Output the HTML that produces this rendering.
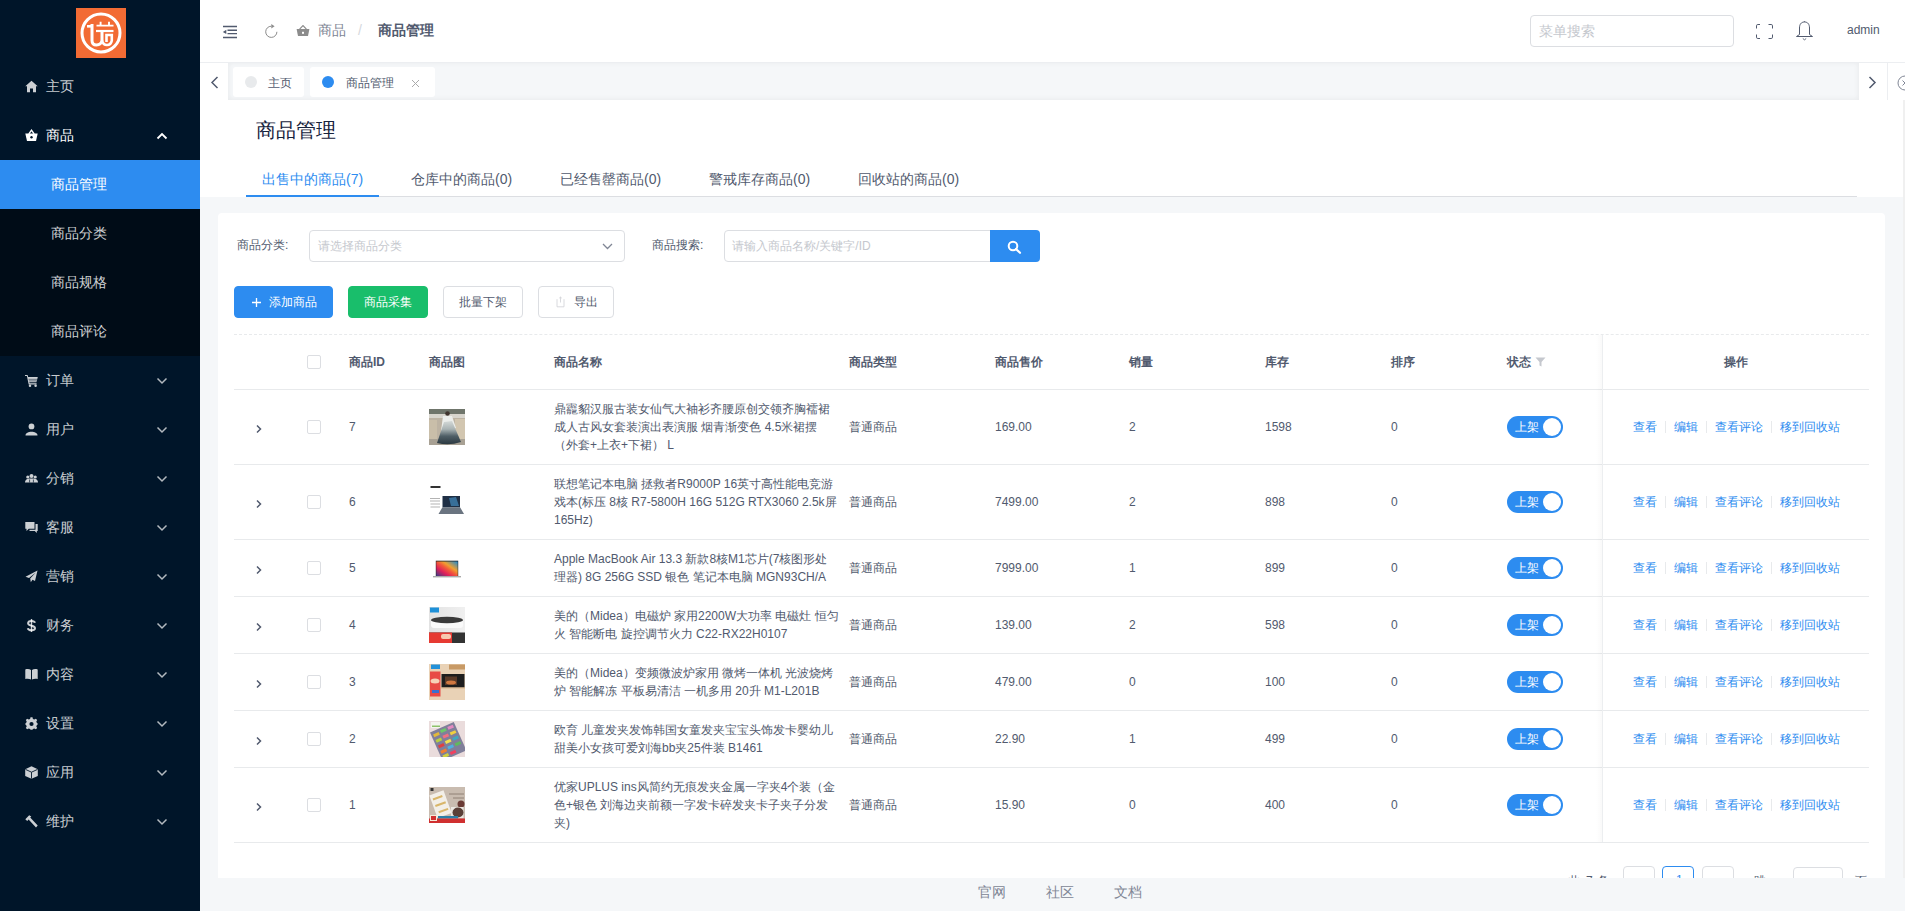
<!DOCTYPE html>
<html><head><meta charset="utf-8"><style>
*{box-sizing:border-box;margin:0;padding:0}
html,body{width:1905px;height:911px;overflow:hidden;background:#f5f7f9;font-family:"Liberation Sans",sans-serif;color:#515a6e;font-size:12px}
svg{display:block}
#side{position:absolute;left:0;top:0;width:200px;height:911px;background:#001529}
#logo{position:absolute;left:76px;top:8px;width:50px;height:50px;background:#f26b34}
.mi{position:absolute;left:0;width:200px;height:49px;color:rgba(255,255,255,.8);font-size:14px}
.mi .ic{position:absolute;left:25px;top:18px}
.mi .tx{position:absolute;left:46px;top:0;line-height:49px}
.mi .ch{position:absolute;left:156px;top:21px}
.mi.open{color:#fff}
.sub{position:absolute;left:0;top:160px;width:200px;height:196px;background:#000c17}
.smi{position:absolute;left:0;width:200px;height:49px;line-height:49px;color:rgba(255,255,255,.82);font-size:14px;padding-left:51px}
.smi.act{background:#2d8cf0;color:#fff}
#hdr{position:absolute;left:200px;top:0;width:1705px;height:62px;background:#fff}
#tabs{position:absolute;left:200px;top:62px;width:1705px;height:38px;background:#f5f7f9}
#main{position:absolute;left:200px;top:100px;width:1703px;height:97px;background:#fff}
#card{position:absolute;left:218px;top:213px;width:1667px;height:700px;background:#fff;border-radius:4px}
#foot{position:absolute;left:200px;top:878px;width:1705px;height:33px;background:#f5f7f9}
.a{position:absolute}
#tbl{position:absolute;left:0;top:0;width:0;height:0}
.th{position:absolute;top:353px;font-size:12px;line-height:18px;font-weight:bold;color:#515a6e;white-space:nowrap}
.td{position:absolute;font-size:12px;line-height:18px;color:#515a6e;white-space:nowrap}
.act{color:#2d8cf0}
.dv{position:absolute;width:1px;height:12px;background:#e8eaec}
.cb{position:absolute;left:307px;width:14px;height:14px;border:1px solid #dcdee2;border-radius:2px;background:#fff}
.sw{position:absolute;left:1507px;width:56px;height:22px;border-radius:11px;background:#2d8cf0}
.knob{position:absolute;left:36px;top:2px;width:18px;height:18px;border-radius:50%;background:#fff}
</style></head><body>
<div id="side">
<div id="logo"><svg width="50" height="50" viewBox="0 0 50 50" fill="none" stroke="#fff"><circle cx="25" cy="25" r="19" stroke-width="3"/><path d="M11 18.3 H16.5" stroke-width="2.6"/><path d="M16 16 V32.5 Q16 37 20.5 37 Q25 37 26 32.5 V22.5" stroke-width="3"/><path d="M26 32.5 Q27 37 31 37 Q35 37 35.8 32.5 V27 H30.5 V34" stroke-width="2.6"/><path d="M20.5 17.6 H37.5 M24.6 13.8 V17.6 M33 13.8 V17.6" stroke-width="1.9"/><path d="M20 23 H37.5" stroke-width="2.2"/></svg></div>
<div class="mi" style="top:62px"><span class="ic"><svg width="13" height="13" viewBox="0 0 13 13" fill="currentColor"><path d="M6.5 0.8 L0.3 6.3 H2 V12.2 H5 V8.5 H8 V12.2 H11 V6.3 H12.7 Z"/></svg></span><span class="tx">主页</span>
</div>
<div class="mi open" style="top:111px"><span class="ic"><svg width="13" height="13" viewBox="0 0 13 13" fill="currentColor"><path d="M3.8 5 L6.5 1.2 L9.2 5" fill="none" stroke="currentColor" stroke-width="1.3"/><path d="M0.3 4.6 H12.7 L11 12 H2 Z"/><circle cx="6.5" cy="8.3" r="1.2" fill="#001529"/></svg></span><span class="tx">商品</span>
<span class="ch"><svg width="12" height="8" viewBox="0 0 12 8"><path d="M1.5 6.5 L6 2 L10.5 6.5" fill="none" stroke="#fff" stroke-width="1.8"/></svg></span>
</div>
<div class="sub">
<div class="smi act" style="top:0px">商品管理</div>
<div class="smi" style="top:49px">商品分类</div>
<div class="smi" style="top:98px">商品规格</div>
<div class="smi" style="top:147px">商品评论</div>
</div>
<div class="mi" style="top:356px"><span class="ic"><svg width="13" height="13" viewBox="0 0 13 13" fill="currentColor"><path d="M0 1 H2.6 L3.1 3 H12.8 L11.4 8.3 H4.3 L4.6 9.3 H11.6 V10.4 H3.7 L1.9 2.1 H0 Z"/><path d="M3.5 5.3 H12 M3.9 6.9 H11.6" stroke="#001529" stroke-width="0.5"/><circle cx="5" cy="11.7" r="1.25"/><circle cx="10.6" cy="11.7" r="1.25"/></svg></span><span class="tx">订单</span><span class="ch"><svg width="12" height="8" viewBox="0 0 12 8"><path d="M1.5 1.5 L6 6 L10.5 1.5" fill="none" stroke="rgba(255,255,255,.7)" stroke-width="1.5"/></svg></span></div>
<div class="mi" style="top:405px"><span class="ic"><svg width="13" height="13" viewBox="0 0 13 13" fill="currentColor"><circle cx="6.5" cy="3.4" r="2.9"/><path d="M0.5 12.5 C0.5 7.6 12.5 7.6 12.5 12.5 Z"/></svg></span><span class="tx">用户</span><span class="ch"><svg width="12" height="8" viewBox="0 0 12 8"><path d="M1.5 1.5 L6 6 L10.5 1.5" fill="none" stroke="rgba(255,255,255,.7)" stroke-width="1.5"/></svg></span></div>
<div class="mi" style="top:454px"><span class="ic"><svg width="13" height="13" viewBox="0 0 13 13" fill="currentColor"><circle cx="2.8" cy="5" r="1.6"/><circle cx="6.5" cy="4" r="2"/><circle cx="10.2" cy="5" r="1.6"/><path d="M0 10.5 C0 6.8 4 6.5 6.5 6.5 C9 6.5 13 6.8 13 10.5 Z"/><path d="M4.6 10.5 V7.5 M8.4 10.5 V7.5" stroke="#001529" stroke-width="0.7"/></svg></span><span class="tx">分销</span><span class="ch"><svg width="12" height="8" viewBox="0 0 12 8"><path d="M1.5 1.5 L6 6 L10.5 1.5" fill="none" stroke="rgba(255,255,255,.7)" stroke-width="1.5"/></svg></span></div>
<div class="mi" style="top:503px"><span class="ic"><svg width="13" height="13" viewBox="0 0 13 13" fill="currentColor"><path d="M0.3 1 H9.5 V7.8 H3.8 L1.5 10 V7.8 H0.3 Z"/><path d="M10.5 3 H12.7 V10 H11.8 V12 L9.8 10 H4.5 V8.8 H10.5 Z"/></svg></span><span class="tx">客服</span><span class="ch"><svg width="12" height="8" viewBox="0 0 12 8"><path d="M1.5 1.5 L6 6 L10.5 1.5" fill="none" stroke="rgba(255,255,255,.7)" stroke-width="1.5"/></svg></span></div>
<div class="mi" style="top:552px"><span class="ic"><svg width="13" height="13" viewBox="0 0 13 13" fill="currentColor"><path d="M12.5 0.5 L0.5 6.8 L4 8 L10.8 2.5 L5.2 8.6 L5.8 12.3 L7.5 9.8 L10 11 Z"/></svg></span><span class="tx">营销</span><span class="ch"><svg width="12" height="8" viewBox="0 0 12 8"><path d="M1.5 1.5 L6 6 L10.5 1.5" fill="none" stroke="rgba(255,255,255,.7)" stroke-width="1.5"/></svg></span></div>
<div class="mi" style="top:601px"><span class="ic"><svg width="13" height="13" viewBox="0 0 13 13" fill="currentColor"><path d="M6.5 0 V13" stroke="currentColor" stroke-width="1.4"/><path d="M10 3.8 C9.6 2.4 8.3 1.9 6.5 1.9 C4.5 1.9 3.1 2.8 3.1 4.3 C3.1 6 4.8 6.3 6.5 6.7 C8.5 7.1 10 7.6 10 9.3 C10 10.8 8.5 11.3 6.5 11.3 C4.5 11.3 3.2 10.6 2.8 9.2" fill="none" stroke="currentColor" stroke-width="2"/></svg></span><span class="tx">财务</span><span class="ch"><svg width="12" height="8" viewBox="0 0 12 8"><path d="M1.5 1.5 L6 6 L10.5 1.5" fill="none" stroke="rgba(255,255,255,.7)" stroke-width="1.5"/></svg></span></div>
<div class="mi" style="top:650px"><span class="ic"><svg width="13" height="13" viewBox="0 0 13 13" fill="currentColor"><path d="M0.3 1.5 C2 0.8 4.5 0.8 6 2 V11.5 C4.5 10.6 2 10.5 0.3 11 Z"/><path d="M12.7 1.5 C11 0.8 8.5 0.8 7 2 V11.5 C8.5 10.6 11 10.5 12.7 11 Z"/></svg></span><span class="tx">内容</span><span class="ch"><svg width="12" height="8" viewBox="0 0 12 8"><path d="M1.5 1.5 L6 6 L10.5 1.5" fill="none" stroke="rgba(255,255,255,.7)" stroke-width="1.5"/></svg></span></div>
<div class="mi" style="top:699px"><span class="ic"><svg width="13" height="13" viewBox="0 0 13 13" fill="currentColor"><path d="M5.5 0.3 H7.5 L7.9 2 L9.3 2.6 L10.8 1.7 L12.2 3.1 L11.3 4.6 L11.9 6 L12.7 6.4 V7.6 L11.9 8 L11.3 9.4 L12.2 10.9 L10.8 12.3 L9.3 11.4 L7.9 12 L7.5 12.7 H5.5 L5.1 12 L3.7 11.4 L2.2 12.3 L0.8 10.9 L1.7 9.4 L1.1 8 L0.3 7.6 V6.4 L1.1 6 L1.7 4.6 L0.8 3.1 L2.2 1.7 L3.7 2.6 L5.1 2 Z"/><circle cx="6.5" cy="7" r="2.1" fill="#001529"/></svg></span><span class="tx">设置</span><span class="ch"><svg width="12" height="8" viewBox="0 0 12 8"><path d="M1.5 1.5 L6 6 L10.5 1.5" fill="none" stroke="rgba(255,255,255,.7)" stroke-width="1.5"/></svg></span></div>
<div class="mi" style="top:748px"><span class="ic"><svg width="13" height="13" viewBox="0 0 13 13" fill="currentColor"><path d="M6.5 0.3 L12.8 3.2 V10 L6.5 12.8 L0.2 10 V3.2 Z"/><path d="M0.5 3.4 L6.5 6.2 L12.5 3.4 M6.5 6.2 V12.6" fill="none" stroke="#001529" stroke-width="0.9"/></svg></span><span class="tx">应用</span><span class="ch"><svg width="12" height="8" viewBox="0 0 12 8"><path d="M1.5 1.5 L6 6 L10.5 1.5" fill="none" stroke="rgba(255,255,255,.7)" stroke-width="1.5"/></svg></span></div>
<div class="mi" style="top:797px"><span class="ic"><svg width="13" height="13" viewBox="0 0 13 13" fill="currentColor"><path d="M0.3 4.2 L4.2 0.3 L6.3 1.5 L5.2 2.6 L12.7 10.6 L11 12.6 L3.6 4.5 L2.2 5.9 Z"/></svg></span><span class="tx">维护</span><span class="ch"><svg width="12" height="8" viewBox="0 0 12 8"><path d="M1.5 1.5 L6 6 L10.5 1.5" fill="none" stroke="rgba(255,255,255,.7)" stroke-width="1.5"/></svg></span></div>
</div>
<div id="hdr">
<svg class="a" style="left:22px;top:25px" width="16" height="14" viewBox="0 0 16 14"><path d="M1 1.5 H15 M5.5 5.2 H15 M5.5 8.6 H15 M1 12.5 H15" stroke="#515a6e" stroke-width="1.4" fill="none"/><path d="M0.8 6.9 L4.3 4.8 V9 Z" fill="#515a6e"/></svg>
<svg class="a" style="left:64px;top:23px" width="16" height="16" viewBox="0 0 16 16"><path d="M12.9 8.8 A5.6 5.6 0 1 1 7.3 3.2" fill="none" stroke="#8c8c8c" stroke-width="1"/><path d="M7.3 1 L10.6 3.2 L7.3 5.4 Z" fill="#8c8c8c"/></svg>
<svg class="a" style="left:96px;top:25px" width="14" height="12" viewBox="0 0 14 12"><path d="M3.6 4.2 L7 0.6 L10.4 4.2" fill="none" stroke="#8c8c8c" stroke-width="1.2"/><path d="M0.6 4 H13.4 L12 11 H2 Z" fill="#8c8c8c"/><rect x="6" y="6.8" width="2" height="2" fill="#fff"/></svg>
<span class="a" style="left:118px;top:21px;font-size:14px;line-height:18px;color:#808695">商品</span>
<span class="a" style="left:158px;top:21px;font-size:14px;line-height:18px;color:#d5d8dd">/</span>
<span class="a" style="left:178px;top:21px;font-size:14px;line-height:18px;color:#515a6e;font-weight:bold">商品管理</span>
<div class="a" style="left:1330px;top:15px;width:204px;height:32px;border:1px solid #dcdee2;border-radius:4px"></div>
<span class="a" style="left:1339px;top:22px;font-size:14px;line-height:18px;color:#c5c8ce">菜单搜索</span>
<svg class="a" style="left:1556px;top:24px" width="17" height="15" viewBox="0 0 17 15"><path d="M0.5 4.5 V1.8 A1.3 1.3 0 0 1 1.8 0.5 H4 M12.5 0.5 H15.2 A1.3 1.3 0 0 1 16.5 1.8 V4.5 M16.5 10.5 V13.2 A1.3 1.3 0 0 1 15.2 14.5 H12.5 M4 14.5 H1.8 A1.3 1.3 0 0 1 0.5 13.2 V10.5" fill="none" stroke="#515a6e" stroke-width="1"/></svg>
<svg class="a" style="left:1595px;top:20px" width="19" height="22" viewBox="0 0 19 22"><path d="M9.5 2 C6 2 4.5 4.5 4.5 8 V14.5 L1.5 16.5 H17.5 L14.5 14.5 V8 C14.5 4.5 13 2 9.5 2 Z" fill="none" stroke="#515a6e" stroke-width="1"/><path d="M7.8 18.5 L9.5 19.8 L11.2 18.5" fill="none" stroke="#515a6e" stroke-width="0.9"/><path d="M8.6 2 L9.5 1 L10.4 2 Z" fill="#515a6e"/></svg>
<span class="a" style="left:1647px;top:22px;font-size:12px;line-height:16px;color:#515a6e">admin</span>
</div>
<div id="tabs">
<div class="a" style="left:28px;top:0;width:1631px;height:38px;box-shadow:inset 0 0 5px 1px rgba(0,0,0,.05)"></div>
<div class="a" style="left:0;top:0;width:1705px;height:1px;background:#eceef1"></div>
<div class="a" style="left:0;top:1px;width:28px;height:37px;background:#fff"><svg class="a" style="left:10px;top:13px" width="9" height="13" viewBox="0 0 9 13"><path d="M7.5 1 L2 6.5 L7.5 12" fill="none" stroke="#515a6e" stroke-width="1.5"/></svg></div>
<div class="a" style="left:33px;top:4.5px;width:71px;height:30.5px;background:#fff;border-radius:3px"><span class="a" style="left:12px;top:9.5px;width:12px;height:12px;border-radius:50%;background:#e8eaec"></span><span class="a" style="left:35px;top:8px;font-size:12px;line-height:16px;color:#515a6e">主页</span></div>
<div class="a" style="left:110px;top:4.5px;width:125px;height:30.5px;background:#fff;border-radius:3px"><span class="a" style="left:12px;top:9.5px;width:12px;height:12px;border-radius:50%;background:#2d8cf0"></span><span class="a" style="left:36px;top:8px;font-size:12px;line-height:16px;color:#515a6e">商品管理</span><svg class="a" style="left:101px;top:12px" width="9" height="9" viewBox="0 0 9 9"><path d="M1 1 L8 8 M8 1 L1 8" stroke="#aaa" stroke-width="1"/></svg></div>
<div class="a" style="left:1659px;top:1px;width:29px;height:37px;background:#fff;border-right:1px solid #eceef1"><svg class="a" style="left:9px;top:13px" width="9" height="13" viewBox="0 0 9 13"><path d="M1.5 1 L7 6.5 L1.5 12" fill="none" stroke="#515a6e" stroke-width="1.5"/></svg></div>
<div class="a" style="left:1688px;top:1px;width:17px;height:37px;background:#fff;overflow:hidden"><svg class="a" style="left:9px;top:12px" width="16" height="16" viewBox="0 0 16 16"><circle cx="8" cy="8" r="7" fill="none" stroke="#808695" stroke-width="1"/><path d="M5.5 5.5 L10.5 10.5 M10.5 5.5 L5.5 10.5" stroke="#808695" stroke-width="1"/></svg></div>
</div>
<div id="main">
<span class="a" style="left:56px;top:17px;font-size:20px;line-height:26px;color:#17233d">商品管理</span>
<div class="a" style="left:46px;top:96px;width:1611px;height:1px;background:#dcdee2"></div>
<span class="a" style="left:62px;top:70px;font-size:14px;line-height:18px;color:#2d8cf0">出售中的商品(7)</span>
<span class="a" style="left:211px;top:70px;font-size:14px;line-height:18px;color:#515a6e">仓库中的商品(0)</span>
<span class="a" style="left:360px;top:70px;font-size:14px;line-height:18px;color:#515a6e">已经售罄商品(0)</span>
<span class="a" style="left:509px;top:70px;font-size:14px;line-height:18px;color:#515a6e">警戒库存商品(0)</span>
<span class="a" style="left:658px;top:70px;font-size:14px;line-height:18px;color:#515a6e">回收站的商品(0)</span>
<div class="a" style="left:46px;top:95px;width:133px;height:2px;background:#2d8cf0"></div>
</div>
<div id="card">
<span class="a" style="left:19px;top:24px;font-size:12px;line-height:16px;color:#515a6e">商品分类:</span>
<div class="a" style="left:91px;top:17px;width:316px;height:32px;border:1px solid #dcdee2;border-radius:4px"><span class="a" style="left:8px;top:7px;font-size:12px;line-height:16px;color:#c5c8ce">请选择商品分类</span><svg class="a" style="left:292px;top:12px" width="11" height="7" viewBox="0 0 11 7"><path d="M1 1 L5.5 5.5 L10 1" fill="none" stroke="#808695" stroke-width="1.3"/></svg></div>
<span class="a" style="left:434px;top:24px;font-size:12px;line-height:16px;color:#515a6e">商品搜索:</span>
<div class="a" style="left:506px;top:17px;width:267px;height:32px;border:1px solid #dcdee2;border-radius:4px 0 0 4px"><span class="a" style="left:7px;top:7px;font-size:12px;line-height:16px;color:#c5c8ce">请输入商品名称/关键字/ID</span></div>
<div class="a" style="left:772px;top:17px;width:50px;height:32px;background:#2d8cf0;border-radius:0 4px 4px 0"><svg class="a" style="left:17px;top:10px" width="15" height="14" viewBox="0 0 15 14"><circle cx="6" cy="6" r="4.3" fill="none" stroke="#fff" stroke-width="2"/><path d="M9 9 L13 12.8" stroke="#fff" stroke-width="2.2" stroke-linecap="round"/></svg></div>
<div class="a" style="left:16px;top:73px;width:99px;height:32px;background:#2d8cf0;border:1px solid #2d8cf0;border-radius:4px;color:#fff;font-size:12px;line-height:30px"><svg class="a" style="left:17px;top:11px" width="9" height="9" viewBox="0 0 9 9"><path d="M4.5 0 V9 M0 4.5 H9" stroke="#fff" stroke-width="1.3"/></svg><span class="a" style="left:34px;top:0">添加商品</span></div>
<div class="a" style="left:130px;top:73px;width:80px;height:32px;background:#19be6b;border:1px solid #19be6b;border-radius:4px;color:#fff;font-size:12px;line-height:30px"><span class="a" style="left:15px;top:0">商品采集</span></div>
<div class="a" style="left:225px;top:73px;width:80px;height:32px;background:#fff;border:1px solid #dcdee2;border-radius:4px;color:#515a6e;font-size:12px;line-height:30px"><span class="a" style="left:15px;top:0">批量下架</span></div>
<div class="a" style="left:320px;top:73px;width:76px;height:32px;background:#fff;border:1px solid #dcdee2;border-radius:4px;color:#515a6e;font-size:12px;line-height:30px"><svg class="a" style="left:17px;top:9px" width="9" height="12" viewBox="0 0 9 12"><path d="M4.5 1 V6.5 M3.2 2.2 L4.5 1 L5.8 2.2 M1 3.2 V10.8 H8 V3.2" fill="none" stroke="#cfd1d6" stroke-width="0.8"/></svg><span class="a" style="left:35px;top:0">导出</span></div>
<div class="a" style="left:16px;top:121px;width:1635px;height:0;border-top:1px dashed #e8eaec"></div>
</div><div id="tbl">
<span class="th" style="left:349px">商品ID</span>
<span class="th" style="left:429px">商品图</span>
<span class="th" style="left:554px">商品名称</span>
<span class="th" style="left:849px">商品类型</span>
<span class="th" style="left:995px">商品售价</span>
<span class="th" style="left:1129px">销量</span>
<span class="th" style="left:1265px">库存</span>
<span class="th" style="left:1391px">排序</span>
<span class="th" style="left:1507px">状态</span>
<svg class="a" style="left:1535px;top:357px" width="11" height="10" viewBox="0 0 11 10"><path d="M0.5 0.5 H10.5 L6.5 5 V9.5 L4.5 8.5 V5 Z" fill="#c5c8ce"/></svg>
<span class="th" style="left:1724px">操作</span>
<div class="cb" style="top:355px"></div>
<div class="a" style="left:234px;top:389px;width:1635px;height:1px;background:#e8eaec"></div>
<div class="a" style="left:234px;top:464px;width:1635px;height:1px;background:#e8eaec"></div>
<svg class="a" style="left:255px;top:423.5px" width="8" height="10" viewBox="0 0 8 10"><path d="M2 1.5 L5.5 5 L2 8.5" fill="none" stroke="#515a6e" stroke-width="1.5"/></svg>
<div class="cb" style="top:420px"></div>
<span class="td" style="left:349px;top:417.5px">7</span>
<div class="a" style="left:429px;top:409px;width:36px;height:36px;overflow:hidden"><svg width="36" height="36" viewBox="0 0 36 36"><defs><linearGradient id="g1" x1="0" y1="0" x2="0" y2="1"><stop offset="0" stop-color="#d5dad8"/><stop offset=".35" stop-color="#a9b3b4"/><stop offset=".65" stop-color="#4f5e66"/><stop offset="1" stop-color="#2a3840"/></linearGradient></defs><rect width="36" height="36" fill="#bdb3a3"/><rect width="36" height="5" fill="#6f756b"/><rect x="0" y="5" width="36" height="4" fill="#d8d5cd"/><rect x="0" y="11" width="8" height="23" fill="#c9bea9"/><rect x="26" y="10" width="10" height="20" fill="#d2c6b0"/><rect y="30" width="36" height="6" fill="#a8a194"/><circle cx="18.5" cy="4.5" r="2.3" fill="#40352f"/><path d="M14 7 L23 7 L27 19 L12 22 Z" fill="#eceeeb"/><path d="M15 13 L23 12 L32 33 Q20 37 8 34 Z" fill="url(#g1)"/></svg></div>
<span class="td" style="left:554px;top:399.5px">鼎龗貂汉服古装女仙气大袖衫齐腰原创交领齐胸襦裙<br>成人古风女套装演出表演服 烟青渐变色 4.5米裙摆<br>（外套+上衣+下裙） L</span>
<span class="td" style="left:849px;top:417.5px">普通商品</span>
<span class="td" style="left:995px;top:417.5px">169.00</span>
<span class="td" style="left:1129px;top:417.5px">2</span>
<span class="td" style="left:1265px;top:417.5px">1598</span>
<span class="td" style="left:1391px;top:417.5px">0</span>
<div class="sw" style="top:415.5px"><span class="a" style="left:8px;top:3px;line-height:16px;font-size:12px;color:#fff">上架</span><span class="knob"></span></div>
<span class="td act" style="top:417.5px;left:1633px">查看</span><span class="dv" style="top:420.5px;left:1665px"></span><span class="td act" style="top:417.5px;left:1674px">编辑</span><span class="dv" style="top:420.5px;left:1706px"></span><span class="td act" style="top:417.5px;left:1715px">查看评论</span><span class="dv" style="top:420.5px;left:1771px"></span><span class="td act" style="top:417.5px;left:1780px">移到回收站</span>
<div class="a" style="left:234px;top:539px;width:1635px;height:1px;background:#e8eaec"></div>
<svg class="a" style="left:255px;top:498.5px" width="8" height="10" viewBox="0 0 8 10"><path d="M2 1.5 L5.5 5 L2 8.5" fill="none" stroke="#515a6e" stroke-width="1.5"/></svg>
<div class="cb" style="top:495px"></div>
<span class="td" style="left:349px;top:492.5px">6</span>
<div class="a" style="left:429px;top:484px;width:36px;height:36px;overflow:hidden"><svg width="36" height="36" viewBox="0 0 36 36"><rect width="36" height="36" fill="#fff"/><rect x="1.5" y="2" width="10" height="2" fill="#333"/><path d="M1 14.5 H11 M1 17 H11 M1.5 20 H11 M1.5 23 H11" stroke="#aaa" stroke-width="0.9"/><rect x="13.5" y="12" width="17.5" height="11.5" fill="#1f2f45"/><path d="M20 14 L27 13 L30 22 L22 22 Z" fill="#3f7fae" opacity=".8"/><path d="M13.3 23.5 H31.2 L35 30 H9.5 Z" fill="#6a7480"/></svg></div>
<span class="td" style="left:554px;top:474.5px">联想笔记本电脑 拯救者R9000P 16英寸高性能电竞游<br>戏本(标压 8核 R7-5800H 16G 512G RTX3060 2.5k屏<br>165Hz)</span>
<span class="td" style="left:849px;top:492.5px">普通商品</span>
<span class="td" style="left:995px;top:492.5px">7499.00</span>
<span class="td" style="left:1129px;top:492.5px">2</span>
<span class="td" style="left:1265px;top:492.5px">898</span>
<span class="td" style="left:1391px;top:492.5px">0</span>
<div class="sw" style="top:490.5px"><span class="a" style="left:8px;top:3px;line-height:16px;font-size:12px;color:#fff">上架</span><span class="knob"></span></div>
<span class="td act" style="top:492.5px;left:1633px">查看</span><span class="dv" style="top:495.5px;left:1665px"></span><span class="td act" style="top:492.5px;left:1674px">编辑</span><span class="dv" style="top:495.5px;left:1706px"></span><span class="td act" style="top:492.5px;left:1715px">查看评论</span><span class="dv" style="top:495.5px;left:1771px"></span><span class="td act" style="top:492.5px;left:1780px">移到回收站</span>
<div class="a" style="left:234px;top:596px;width:1635px;height:1px;background:#e8eaec"></div>
<svg class="a" style="left:255px;top:564.5px" width="8" height="10" viewBox="0 0 8 10"><path d="M2 1.5 L5.5 5 L2 8.5" fill="none" stroke="#515a6e" stroke-width="1.5"/></svg>
<div class="cb" style="top:561px"></div>
<span class="td" style="left:349px;top:558.5px">5</span>
<div class="a" style="left:429px;top:550px;width:36px;height:36px;overflow:hidden"><svg width="36" height="36" viewBox="0 0 36 36"><defs><linearGradient id="g3" x1="1" y1="0" x2="0" y2="1"><stop offset="0" stop-color="#1a8ad4"/><stop offset=".35" stop-color="#f0a030"/><stop offset=".5" stop-color="#f25a3a"/><stop offset=".7" stop-color="#e0205a"/><stop offset="1" stop-color="#3a3a8a"/></linearGradient></defs><rect width="36" height="36" fill="#fff"/><rect x="6.8" y="10.7" width="22.4" height="15.5" fill="#222"/><rect x="7.3" y="11.5" width="21.4" height="14.5" fill="url(#g3)"/><rect x="4" y="26" width="28" height="1.4" fill="#aaa"/></svg></div>
<span class="td" style="left:554px;top:549.5px">Apple MacBook Air 13.3 新款8核M1芯片(7核图形处<br>理器) 8G 256G SSD 银色 笔记本电脑 MGN93CH/A</span>
<span class="td" style="left:849px;top:558.5px">普通商品</span>
<span class="td" style="left:995px;top:558.5px">7999.00</span>
<span class="td" style="left:1129px;top:558.5px">1</span>
<span class="td" style="left:1265px;top:558.5px">899</span>
<span class="td" style="left:1391px;top:558.5px">0</span>
<div class="sw" style="top:556.5px"><span class="a" style="left:8px;top:3px;line-height:16px;font-size:12px;color:#fff">上架</span><span class="knob"></span></div>
<span class="td act" style="top:558.5px;left:1633px">查看</span><span class="dv" style="top:561.5px;left:1665px"></span><span class="td act" style="top:558.5px;left:1674px">编辑</span><span class="dv" style="top:561.5px;left:1706px"></span><span class="td act" style="top:558.5px;left:1715px">查看评论</span><span class="dv" style="top:561.5px;left:1771px"></span><span class="td act" style="top:558.5px;left:1780px">移到回收站</span>
<div class="a" style="left:234px;top:653px;width:1635px;height:1px;background:#e8eaec"></div>
<svg class="a" style="left:255px;top:621.5px" width="8" height="10" viewBox="0 0 8 10"><path d="M2 1.5 L5.5 5 L2 8.5" fill="none" stroke="#515a6e" stroke-width="1.5"/></svg>
<div class="cb" style="top:618px"></div>
<span class="td" style="left:349px;top:615.5px">4</span>
<div class="a" style="left:429px;top:607px;width:36px;height:36px;overflow:hidden"><svg width="36" height="36" viewBox="0 0 36 36"><defs><linearGradient id="g4" x1="0" y1="0" x2="1" y2="0"><stop offset="0" stop-color="#e2e2e2"/><stop offset="1" stop-color="#f0f0f0"/></linearGradient></defs><rect width="36" height="36" fill="url(#g4)"/><rect x="1" y="0.5" width="9" height="5" fill="#1e90d8"/><rect x="2" y="13" width="32" height="8" rx="3" fill="#fafafa"/><ellipse cx="18" cy="13" rx="16" ry="3.2" fill="#3a3a3a"/><rect x="0" y="25.5" width="36" height="10.5" fill="#333"/><rect x="0" y="25.5" width="23" height="10.5" fill="#e63a32"/><rect x="12" y="27" width="10" height="5" rx="2" fill="#f7c9b0"/></svg></div>
<span class="td" style="left:554px;top:606.5px">美的（Midea）电磁炉 家用2200W大功率 电磁灶 恒匀<br>火 智能断电 旋控调节火力 C22-RX22H0107</span>
<span class="td" style="left:849px;top:615.5px">普通商品</span>
<span class="td" style="left:995px;top:615.5px">139.00</span>
<span class="td" style="left:1129px;top:615.5px">2</span>
<span class="td" style="left:1265px;top:615.5px">598</span>
<span class="td" style="left:1391px;top:615.5px">0</span>
<div class="sw" style="top:613.5px"><span class="a" style="left:8px;top:3px;line-height:16px;font-size:12px;color:#fff">上架</span><span class="knob"></span></div>
<span class="td act" style="top:615.5px;left:1633px">查看</span><span class="dv" style="top:618.5px;left:1665px"></span><span class="td act" style="top:615.5px;left:1674px">编辑</span><span class="dv" style="top:618.5px;left:1706px"></span><span class="td act" style="top:615.5px;left:1715px">查看评论</span><span class="dv" style="top:618.5px;left:1771px"></span><span class="td act" style="top:615.5px;left:1780px">移到回收站</span>
<div class="a" style="left:234px;top:710px;width:1635px;height:1px;background:#e8eaec"></div>
<svg class="a" style="left:255px;top:678.5px" width="8" height="10" viewBox="0 0 8 10"><path d="M2 1.5 L5.5 5 L2 8.5" fill="none" stroke="#515a6e" stroke-width="1.5"/></svg>
<div class="cb" style="top:675px"></div>
<span class="td" style="left:349px;top:672.5px">3</span>
<div class="a" style="left:429px;top:664px;width:36px;height:36px;overflow:hidden"><svg width="36" height="36" viewBox="0 0 36 36"><rect width="36" height="36" fill="#e9d2b6"/><rect x="20" y="0.5" width="16" height="5" fill="#c89a66"/><rect x="2" y="0.5" width="9" height="4.5" fill="#2391d9"/><rect x="1" y="7.5" width="10.5" height="25" fill="#e84a45"/><ellipse cx="6" cy="17" rx="4.5" ry="2.5" fill="#f6d2b8"/><rect x="3" y="26" width="7" height="3" fill="#3a6fcf"/><rect x="12.5" y="10" width="23" height="13.5" fill="#1e1e1e"/><rect x="16" y="12.5" width="12" height="8.5" fill="#5a3a28"/><ellipse cx="22" cy="18.5" rx="5" ry="2" fill="#d07840"/><rect x="12" y="23.5" width="24" height="1" fill="#d9b48a"/></svg></div>
<span class="td" style="left:554px;top:663.5px">美的（Midea）变频微波炉家用 微烤一体机 光波烧烤<br>炉 智能解冻 平板易清洁 一机多用 20升 M1-L201B</span>
<span class="td" style="left:849px;top:672.5px">普通商品</span>
<span class="td" style="left:995px;top:672.5px">479.00</span>
<span class="td" style="left:1129px;top:672.5px">0</span>
<span class="td" style="left:1265px;top:672.5px">100</span>
<span class="td" style="left:1391px;top:672.5px">0</span>
<div class="sw" style="top:670.5px"><span class="a" style="left:8px;top:3px;line-height:16px;font-size:12px;color:#fff">上架</span><span class="knob"></span></div>
<span class="td act" style="top:672.5px;left:1633px">查看</span><span class="dv" style="top:675.5px;left:1665px"></span><span class="td act" style="top:672.5px;left:1674px">编辑</span><span class="dv" style="top:675.5px;left:1706px"></span><span class="td act" style="top:672.5px;left:1715px">查看评论</span><span class="dv" style="top:675.5px;left:1771px"></span><span class="td act" style="top:672.5px;left:1780px">移到回收站</span>
<div class="a" style="left:234px;top:767px;width:1635px;height:1px;background:#e8eaec"></div>
<svg class="a" style="left:255px;top:735.5px" width="8" height="10" viewBox="0 0 8 10"><path d="M2 1.5 L5.5 5 L2 8.5" fill="none" stroke="#515a6e" stroke-width="1.5"/></svg>
<div class="cb" style="top:732px"></div>
<span class="td" style="left:349px;top:729.5px">2</span>
<div class="a" style="left:429px;top:721px;width:36px;height:36px;overflow:hidden"><svg width="36" height="36" viewBox="0 0 36 36"><rect width="36" height="36" fill="#eadcdc"/><rect x="2" y="1" width="9" height="6" fill="#f4f4f0"/><rect x="3" y="4.5" width="8" height="1.5" fill="#8dc26a"/><g transform="rotate(-24 19 20)"><rect x="6" y="5" width="26" height="31" fill="#807f9a"/><rect x="8" y="8" width="6" height="3" fill="#e3b93a"/><rect x="16" y="7" width="6" height="3" fill="#6cc86a"/><rect x="24" y="7" width="6" height="3" fill="#e28ac0"/><rect x="8" y="14" width="6" height="3" fill="#b8d040"/><rect x="16" y="13" width="6" height="3" fill="#f07080"/><rect x="24" y="13" width="6" height="3" fill="#f0d040"/><rect x="8" y="20" width="6" height="3" fill="#e04040"/><rect x="16" y="19" width="6" height="3" fill="#f0e050"/><rect x="24" y="19" width="6" height="3" fill="#40a8c0"/><rect x="8" y="26" width="6" height="3" fill="#f08030"/><rect x="16" y="25" width="6" height="3" fill="#50b0e0"/><rect x="24" y="25" width="6" height="3" fill="#60b860"/><rect x="8" y="31" width="6" height="3" fill="#d0d040"/><rect x="16" y="31" width="6" height="3" fill="#f04060"/></g></svg></div>
<span class="td" style="left:554px;top:720.5px">欧育 儿童发夹发饰韩国女童发夹宝宝头饰发卡婴幼儿<br>甜美小女孩可爱刘海bb夹25件装 B1461</span>
<span class="td" style="left:849px;top:729.5px">普通商品</span>
<span class="td" style="left:995px;top:729.5px">22.90</span>
<span class="td" style="left:1129px;top:729.5px">1</span>
<span class="td" style="left:1265px;top:729.5px">499</span>
<span class="td" style="left:1391px;top:729.5px">0</span>
<div class="sw" style="top:727.5px"><span class="a" style="left:8px;top:3px;line-height:16px;font-size:12px;color:#fff">上架</span><span class="knob"></span></div>
<span class="td act" style="top:729.5px;left:1633px">查看</span><span class="dv" style="top:732.5px;left:1665px"></span><span class="td act" style="top:729.5px;left:1674px">编辑</span><span class="dv" style="top:732.5px;left:1706px"></span><span class="td act" style="top:729.5px;left:1715px">查看评论</span><span class="dv" style="top:732.5px;left:1771px"></span><span class="td act" style="top:729.5px;left:1780px">移到回收站</span>
<div class="a" style="left:234px;top:842px;width:1635px;height:1px;background:#e8eaec"></div>
<svg class="a" style="left:255px;top:801.5px" width="8" height="10" viewBox="0 0 8 10"><path d="M2 1.5 L5.5 5 L2 8.5" fill="none" stroke="#515a6e" stroke-width="1.5"/></svg>
<div class="cb" style="top:798px"></div>
<span class="td" style="left:349px;top:795.5px">1</span>
<div class="a" style="left:429px;top:787px;width:36px;height:36px;overflow:hidden"><svg width="36" height="36" viewBox="0 0 36 36"><rect width="36" height="36" fill="#c9bcb0"/><rect x="1.5" y="1" width="3" height="3" fill="#333"/><g transform="rotate(-20 12 17)"><rect x="4" y="5" width="15" height="24" fill="#f3efe8"/><path d="M6 10 H16 M6 17 H17 M7 24 H17" stroke="#d9b66a" stroke-width="2"/></g><circle cx="32" cy="17" r="3.5" fill="#6b3b35"/><path d="M20 7 H35 M24 11 H35" stroke="#8a7a70" stroke-width="0.9"/><rect x="22" y="20" width="12.5" height="11" fill="#eae6e0"/><ellipse cx="29" cy="25.5" rx="5.5" ry="5" fill="#5a4038"/><rect x="9" y="29" width="20" height="2.5" fill="#2c7fa8"/><rect x="0" y="31.5" width="36" height="4.5" fill="#d03030"/><rect x="1" y="28" width="7" height="6" fill="#f5ead8"/><rect x="2" y="29" width="5" height="4" fill="#d03030"/></svg></div>
<span class="td" style="left:554px;top:777.5px">优家UPLUS ins风简约无痕发夹金属一字夹4个装（金<br>色+银色 刘海边夹前额一字发卡碎发夹卡子夹子分发<br>夹)</span>
<span class="td" style="left:849px;top:795.5px">普通商品</span>
<span class="td" style="left:995px;top:795.5px">15.90</span>
<span class="td" style="left:1129px;top:795.5px">0</span>
<span class="td" style="left:1265px;top:795.5px">400</span>
<span class="td" style="left:1391px;top:795.5px">0</span>
<div class="sw" style="top:793.5px"><span class="a" style="left:8px;top:3px;line-height:16px;font-size:12px;color:#fff">上架</span><span class="knob"></span></div>
<span class="td act" style="top:795.5px;left:1633px">查看</span><span class="dv" style="top:798.5px;left:1665px"></span><span class="td act" style="top:795.5px;left:1674px">编辑</span><span class="dv" style="top:798.5px;left:1706px"></span><span class="td act" style="top:795.5px;left:1715px">查看评论</span><span class="dv" style="top:798.5px;left:1771px"></span><span class="td act" style="top:795.5px;left:1780px">移到回收站</span>
<div class="a" style="left:1596px;top:335px;width:6px;height:507px;background:linear-gradient(90deg,rgba(0,0,0,0),rgba(0,0,0,.025))"></div>
<div class="a" style="left:1602px;top:335px;width:1px;height:507px;background:#eceef0"></div>
<span class="a" style="left:1568px;top:872px;font-size:12px;line-height:18px;color:#515a6e">共</span><span class="a" style="left:1586px;top:872px;font-size:12px;line-height:18px;color:#515a6e">7</span><span class="a" style="left:1597px;top:872px;font-size:12px;line-height:18px;color:#515a6e">条</span>
<div class="a" style="left:1623px;top:866px;width:32px;height:32px;border:1px solid #dcdee2;border-radius:4px;background:#fff"></div>
<div class="a" style="left:1662px;top:866px;width:32px;height:32px;border:1px solid #2d8cf0;border-radius:4px;background:#fff"><span class="a" style="left:13px;top:4px;font-size:12px;line-height:18px;color:#2d8cf0">1</span></div>
<div class="a" style="left:1702px;top:866px;width:32px;height:32px;border:1px solid #dcdee2;border-radius:4px;background:#fff"></div>
<span class="a" style="left:1754px;top:872px;font-size:12px;line-height:18px;color:#515a6e">跳至</span>
<div class="a" style="left:1793px;top:867px;width:50px;height:32px;border:1px solid #dcdee2;border-radius:4px;background:#fff"></div>
<span class="a" style="left:1855px;top:872px;font-size:12px;line-height:18px;color:#515a6e">页</span>
</div>
<div id="foot"><span class="a" style="left:778px;top:5px;font-size:14px;line-height:18px;color:#808695">官网</span><span class="a" style="left:846px;top:5px;font-size:14px;line-height:18px;color:#808695">社区</span><span class="a" style="left:914px;top:5px;font-size:14px;line-height:18px;color:#808695">文档</span></div><div class="a" style="left:1903px;top:100px;width:2px;height:778px;background:#f0f0f0"></div>
</body></html>
